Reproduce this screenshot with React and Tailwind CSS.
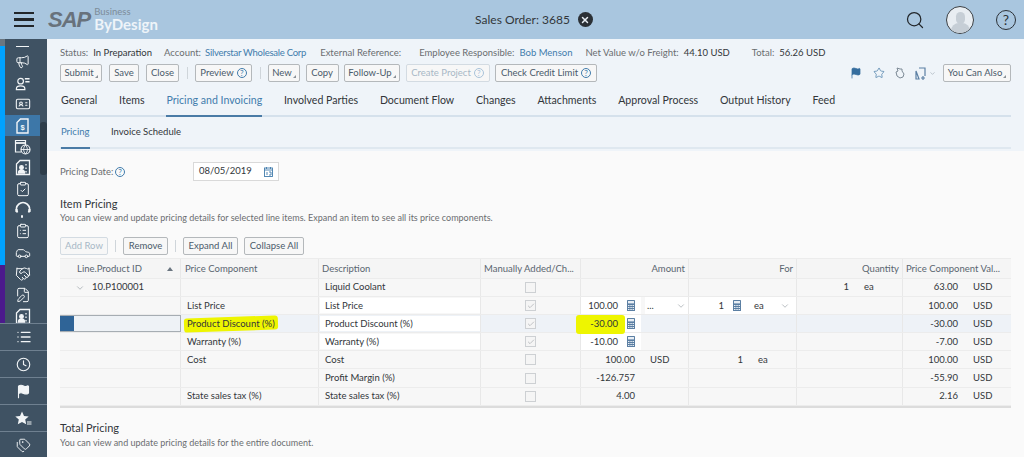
import React from "react";
import {
  Megaphone,
  IdCard,
  ClipboardCheck,
  ClipboardList,
  Car,
  Handshake,
  FilePen,
  List,
  Clock,
  Flag,
  Star,
  Tags,
  Search,
  ChevronDown,
  Check,
  X,
} from "lucide-react";

const PersonList = () => (
  <svg width="15" height="15" viewBox="0 0 16 16" fill="none" stroke="currentColor" strokeWidth="1.3">
    <circle cx="6" cy="5.5" r="3" />
    <path d="M1.5 14.5v-1c0-2 2-3 4.5-3s4.5 1 4.5 3v1z" />
    <path d="M10.5 3h5M11 6h4.5" strokeWidth="1.6" />
  </svg>
);

const DollarDoc = () => (
  <svg width="13" height="16" viewBox="0 0 13 16" fill="none" stroke="currentColor" strokeWidth="1.4">
    <path d="M4.500 1H12v14H1V4.500z" />
    <text x="4.500" y="11.500" fontSize="7.500" fill="currentColor" stroke="none" fontFamily="Liberation Sans, sans-serif" fontWeight="700">
      $
    </text>
  </svg>
);

const CalendarGlobe = () => (
  <svg width="17" height="17" viewBox="0 0 17 17" fill="none" stroke="currentColor" strokeWidth="1.2">
    <path d="M7 14H1.500V2.500h10V7" />
    <path d="M1.500 5h10" strokeWidth="1.800" />
    <circle cx="11.500" cy="11.500" r="4.500" />
    <path d="M7 11.500h9M11.500 7c-2.500 3-2.500 6 0 9M11.500 7c2.500 3 2.500 6 0 9" strokeWidth="0.9" />
  </svg>
);

const ContactDoc = () => (
  <svg width="16" height="17" viewBox="0 0 16 17" fill="none" stroke="currentColor" strokeWidth="1.3">
    <path d="M5 1.500h9.500v14h-13V5z" />
    <circle cx="6.500" cy="8.500" r="1.800" fill="currentColor" />
    <path d="M3.500 14c0-2 1.300-3 3-3s3 1 3 3z" fill="currentColor" />
    <path d="M11 5v1.500M11 8.500V10M11 12v1.500" />
  </svg>
);

const HeadArc = () => (
  <svg width="16" height="18" viewBox="0 0 16 18" fill="none" stroke="currentColor" strokeWidth="1.800">
    <path d="M2.500 11.500a6.500 6.500 0 1 1 11 0" />
    <path d="M1.500 8v3M14.500 8v3" strokeWidth="2.200" />
    <path d="M6 15.500h2" strokeWidth="2.400" />
  </svg>
);

const StarList = () => (
  <svg width="17" height="15" viewBox="0 0 17 15">
    <path d="M7 0.500l2 4.400 4.700.5-3.500 3.200 1 4.700L7 10.900l-4.200 2.400 1-4.700L.3 5.400 5 4.900z" fill="currentColor" />
    <path d="M12 11h4.500M12 13h4.500" stroke="currentColor" strokeWidth="1" />
  </svg>
);

const Calc = () => (
  <svg width="8" height="11" viewBox="0 0 8 11" className="shrink-0">
    <rect width="8" height="11" rx="0.600" fill="#5b7fa3" />
    <rect x="1" y="1" width="6" height="2.400" fill="#e8eef4" />
    <path d="M1 5h1.500v1H1zM3.300 5h1.500v1H3.300zM5.500 5H7v1H5.500zM1 7h1.500v1H1zM3.300 7h1.500v1H3.300zM5.500 7H7v1H5.500zM1 9h1.500v1H1zM3.300 9h1.500v1H3.300zM5.500 9H7v1H5.500z" fill="#e8eef4" />
  </svg>
);

const HelpDot = ({ light }) => (
  <span
    className={`inline-flex shrink-0 items-center justify-center w-[10px] h-[10px] rounded-full border text-[8px] leading-none ${
      light ? "border-[#a9c3da] text-[#a9c3da]" : "border-[#427cac] text-[#427cac]"
    }`}
  >
    ?
  </span>
);

const Corner = () => (
  <span className="self-end mb-[3px] -ml-[2px] w-0 h-0 border-l-[3px] border-l-transparent border-b-[3px] border-b-[#8a9299]" />
);

const Btn = ({ children, w, off }) => (
  <button
    type="button"
    className={`h-[18px] shrink-0 whitespace-nowrap rounded-[2px] border bg-[#f7f7f7] flex items-center justify-center gap-[3px] text-[9.500px] ${w} ${
      off ? "border-[#d3dbe2] text-[#a7b7c6]" : "border-[#b4b8bb] text-[#4a5a6a]"
    }`}
  >
    {children}
  </button>
);

const Sep = () => <span className="w-px h-[12px] bg-[#cfd5da] mx-[7px]" />;

const navIcons = [
  <Megaphone size={15} strokeWidth={1.600} />,
  <PersonList />,
  <IdCard size={16} strokeWidth={1.600} />,
  <DollarDoc />,
  <CalendarGlobe />,
  <ContactDoc />,
  <ClipboardCheck size={16} strokeWidth={1.500} />,
  <HeadArc />,
  <ClipboardList size={16} strokeWidth={1.500} />,
  <Car size={16} strokeWidth={1.500} />,
  <Handshake size={16} strokeWidth={1.500} />,
  <FilePen size={16} strokeWidth={1.500} />,
  <ContactDoc />,
];

const bottomIcons = [
  <List size={16} strokeWidth={2} />,
  <Clock size={15} strokeWidth={1.800} />,
  <Flag size={15} strokeWidth={1.800} fill="currentColor" />,
  <StarList />,
  <Tags size={15} strokeWidth={1.500} />,
];

const Sidebar = () => (
  <aside className="w-[47px] shrink-0 h-full bg-[#3f5263] flex flex-col text-[#f2f5f7]">
    <div className="h-[284px] shrink-0 flex overflow-hidden">
      <div className="w-[5px] flex flex-col">
        <div className="h-[7px] bg-[#6b7680]" />
        <div className="h-[219px] bg-[#00a2ff]" />
        <div className="flex-1 bg-[#4b1a8c]" />
      </div>
      <div className="w-[35px] flex flex-col">
        <div className="h-[12.400px] shrink-0 flex justify-center pt-[7px]">
          <span className="w-[13px] h-px bg-[#f2f5f7]" />
        </div>
        {navIcons.map((icon, i) => (
          <div key={i} className={`h-[21.200px] shrink-0 flex items-center justify-center ${i === 3 ? "bg-[#3d77a8]" : ""}`}>
            {icon}
          </div>
        ))}
      </div>
      <div className="w-[7px] pt-[83px]">
        <div className="h-[53px] rounded-[3px] bg-[#2e3d4a]" />
      </div>
    </div>
    {bottomIcons.map((icon, i) => (
      <div key={i} className="h-[27px] shrink-0 border-t border-[#6f8090] flex items-center justify-center">
        {icon}
      </div>
    ))}
  </aside>
);

const tabs = ["General", "Items", "Pricing and Invoicing", "Involved Parties", "Document Flow", "Changes", "Attachments", "Approval Process", "Output History", "Feed"];

// widths of the eight table columns
const cols = "grid grid-cols-[121px_138px_162px_100px_108px_108px_106px_108px]";

const rows = [
  { id: "10.P100001", desc: "Liquid Coolant", box: "empty", qty: "1", value: "63.00" },
  { comp: "List Price", desc: "List Price", white: true, box: "check", amount: "100.00", input: true, unitDots: true, forQty: "1", forUnit: "ea", forInput: true, value: "100.00" },
  { comp: "Product Discount (%)", desc: "Product Discount (%)", white: true, box: "check", amount: "-30.00", input: true, marked: true, selected: true, value: "-30.00" },
  { comp: "Warranty (%)", desc: "Warranty (%)", white: true, box: "check", amount: "-10.00", input: true, value: "-7.00" },
  { comp: "Cost", desc: "Cost", box: "empty", plainAmount: "100.00", cur: "USD", plainFor: "1", forUnit: "ea", value: "100.00" },
  { desc: "Profit Margin (%)", box: "empty", plainAmount: "-126.757", value: "-55.90" },
  { comp: "State sales tax (%)", desc: "State sales tax (%)", box: "empty", plainAmount: "4.00", value: "2.16" },
];

const Marker = ({ children, className }) => (
  <span className="relative inline-block">
    <span className={`absolute bg-[#eef500] rounded-[3px] ${className}`} />
    <span className="relative">{children}</span>
  </span>
);

const Box = ({ checked }) => (
  <span className="w-[11px] h-[11px] border border-[#cdd0d3] bg-[#f5f5f5] flex items-center justify-center">
    {checked && <Check size={8} strokeWidth={1.500} className="text-[#8a8f94]" />}
  </span>
);

const ValuePair = ({ left, right }) => (
  <div className="flex gap-[4px] h-full">
    <div className="flex-1 flex items-center justify-end pr-[5px]">{left}</div>
    <div className="w-[44px] flex items-center pl-[6px]">{right}</div>
  </div>
);

const Row = ({ r }) => {
  const bg = r.selected ? "bg-[#eef2f7]" : "bg-[#f7f7f7]";
  const cell = "border-r border-[#e8e8e8] min-w-0";
  return (
    <div className={`${cols} h-[18.100px] border-b border-[#ececec] text-[9.500px] text-[#32363a] ${bg}`}>
      {r.selected ? (
        <div className="flex border border-[#a6adb3] border-l-0">
          <div className="w-[14px] bg-[#2f6497]" />
          <div className="flex-1 bg-[#eef2f6]" />
        </div>
      ) : (
        <div className={`${cell} flex items-center gap-[7px] pl-[15px]`}>
          {r.id && (
            <>
              <ChevronDown size={10} strokeWidth={1} className="text-[#5a6570]" />
              <span>{r.id}</span>
            </>
          )}
        </div>
      )}
      <div className={`${cell} flex items-center pl-[6px]`}>
        {r.marked ? (
          <Marker className="-left-[3px] -right-[3px] top-0 bottom-0 -rotate-2">{r.comp}</Marker>
        ) : (
          r.comp
        )}
      </div>
      <div className={`${cell} py-px pl-[1px]`}>
        <div className={`h-full flex items-center pl-[5px] ${r.white ? "bg-white" : ""}`}>{r.desc}</div>
      </div>
      <div className={`${cell} flex items-center justify-center`}>
        <Box checked={r.box === "check"} />
      </div>
      <div className={cell}>
        {r.input ? (
          <div className="flex h-full">
            <div className={`w-[60px] flex items-center justify-end gap-[9px] pr-[6px] ${r.white ? "bg-white" : ""}`}>
              {r.marked ? <Marker className="-left-[14px] -right-[7px] -top-[2px] -bottom-[3px]">{r.amount}</Marker> : r.amount}
              <Calc />
            </div>
            {r.unitDots && (
              <div className="flex-1 ml-[4px] bg-white flex items-center justify-between pl-[2px] pr-[2px]">
                <span>...</span>
                <ChevronDown size={10} strokeWidth={1} className="text-[#5a6570]" />
              </div>
            )}
          </div>
        ) : (
          <ValuePair left={r.plainAmount} right={r.cur} />
        )}
      </div>
      <div className={cell}>
        {r.forInput ? (
          <div className="flex h-full bg-white items-center">
            <span className="w-[35px] text-right">{r.forQty}</span>
            <span className="ml-[9px]"><Calc /></span>
            <span className="ml-[13px]">{r.forUnit}</span>
            <ChevronDown size={10} strokeWidth={1} className="ml-[16px] text-[#5a6570]" />
          </div>
        ) : (
          <ValuePair left={r.plainFor} right={r.forUnit} />
        )}
      </div>
      <div className={cell}>
        <ValuePair left={r.qty} right={r.qty && "ea"} />
      </div>
      <div className="min-w-0">
        <ValuePair left={r.value} right="USD" />
      </div>
    </div>
  );
};

const App = () => {
  const headCell = "border-r border-[#e8e8e8] flex items-center pt-px";
  const label = "text-[#6a6d70]";
  return (
    <div className="w-[1024px] h-[457px] overflow-hidden flex flex-col bg-[#fafafa] font-['Lato',sans-serif] text-[#32363a]">
      <header className="h-[39px] shrink-0 bg-[#a9c6df] flex items-center">
        <div className="w-[47px] flex flex-col items-center gap-[4px]">
          <span className="w-[20px] h-[2.500px] bg-[#22262a]" />
          <span className="w-[20px] h-[2.500px] bg-[#22262a]" />
          <span className="w-[20px] h-[2.500px] bg-[#22262a]" />
        </div>
        <div className="flex items-start w-[115px] ml-[1px]">
          <span className="font-['Liberation_Sans',sans-serif] font-bold italic text-[22px] leading-none text-[#68727c] tracking-[-1px]">SAP</span>
          <div className="flex flex-col ml-[4px] -mt-[2px]">
            <span className="text-[9.500px] leading-[10px] text-[#7d8c99]">Business</span>
            <span className="text-[15px] leading-[14px] font-bold text-[#eef4f9]">ByDesign</span>
          </div>
        </div>
        <div className="flex-1 flex items-center justify-center gap-[8px] text-[12px]">
          <span className="text-[#32363a]">Sales Order: 3685</span>
          <span className="w-[15px] h-[15px] rounded-full bg-[#2b3036] flex items-center justify-center">
            <X size={10} strokeWidth={3.500} className="text-[#e9eff5]" />
          </span>
        </div>
        <div className="flex items-center pr-[8px]">
          <Search size={20} strokeWidth={1.500} className="text-[#22262a] mr-[21px]" />
          <div className="w-[28px] h-[28px] rounded-full border-[1.500px] border-[#3a3f44] bg-[#e8edf2] overflow-hidden flex flex-col items-center mr-[22px]">
            <span className="w-[9px] h-[12px] rounded-full bg-[#c6ced6] mt-[5px]" />
            <span className="w-[19px] h-[10px] rounded-t-[8px] bg-[#c6ced6] -mt-[1px]" />
          </div>
          <span className="w-[20px] h-[20px] rounded-full border-[1.500px] border-[#2b3036] flex items-center justify-center text-[14px] leading-none text-[#2b3036]">?</span>
        </div>
      </header>

      <div className="flex-1 min-h-0 flex">
        <Sidebar />
        <main className="flex-1 min-w-0 flex flex-col">
          <section className="h-[112px] shrink-0 bg-[#eff4f9] px-[13px]">
            <div className="h-[25px] pt-[3px] flex items-center text-[9.500px] whitespace-nowrap">
              <span className={label}>Status:</span>
              <span className="ml-[5px]">In Preparation</span>
              <span className={`${label} ml-[12px] w-[36px]`}>Account:</span>
              <span className="ml-[5px] text-[#427cac] tracking-[-0.25px]">Silverstar Wholesale Corp</span>
              <span className={`${label} ml-[14px]`}>External Reference:</span>
              <span className={`${label} ml-[18px]`}>Employee Responsible:</span>
              <span className="ml-[5px] text-[#427cac]">Bob Menson</span>
              <span className={`${label} ml-[13px]`}>Net Value w/o Freight:</span>
              <span className="ml-[5px]">44.10 USD</span>
              <span className={`${label} ml-[22px]`}>Total:</span>
              <span className="ml-[5px]">56.26 USD</span>
            </div>
            <div className="flex items-center h-[18px]">
              <div className="flex items-center gap-[7px]">
                <Btn w="w-[42px]">Submit<Corner /></Btn>
                <Btn w="w-[30px]">Save</Btn>
                <Btn w="w-[33px]">Close</Btn>
              </div>
              <span className="w-px h-[12px] bg-[#cfd5da] ml-[8px] mr-[7px]" />
              <Btn w="w-[57px]">Preview <HelpDot /></Btn>
              <span className="w-px h-[12px] bg-[#cfd5da] ml-[8px] mr-[7px]" />
              <div className="flex items-center gap-[5.500px]">
                <Btn w="w-[32px]">New<Corner /></Btn>
                <Btn w="w-[33px]">Copy</Btn>
                <Btn w="w-[56px]">Follow-Up<Corner /></Btn>
                <Btn w="w-[84px]" off>Create Project <HelpDot light /></Btn>
                <Btn w="w-[102px]">Check Credit Limit <HelpDot /></Btn>
              </div>
              <div className="ml-auto flex items-center text-[#5b7fa3]">
                <Flag size={12} fill="#356d9e" strokeWidth={1.500} className="text-[#356d9e] mr-[11px]" />
                <Star size={12} strokeWidth={1.300} className="text-[#356d9e] mr-[10px]" />
                <svg width="10" height="12" viewBox="0 0 10 12" fill="none" stroke="#7d8a96" strokeWidth="1" className="mr-[10px]">
                  <path d="M2 1l3 1h2v2l2 3-1 3-3 1-3-2-1-4 2-1z" />
                </svg>
                <svg width="11" height="13" viewBox="0 0 11 13" fill="none" stroke="#5b7fa3" strokeWidth="1.200">
                  <path d="M4 1h6v8M4 12H1V4z" />
                  <path d="M8 9v4M6 11h4" />
                </svg>
                <ChevronDown size={7} strokeWidth={1.500} className="text-[#7d8a96] ml-[3px] mr-[7px]" />
                <Btn w="w-[68px]">You Can Also<Corner /></Btn>
              </div>
            </div>
            <div className="flex gap-[21.800px] h-[35px] border-b-2 border-[#d5e1ec] pl-[1px] text-[10.600px] text-[#32363a]">
              {tabs.map((t) => (
                <span
                  key={t}
                  className={`flex items-center pt-[5px] -mb-[2px] border-b-2 whitespace-nowrap ${
                    t === "Pricing and Invoicing" ? "text-[#427cac] border-[#4a7ba6]" : "border-transparent"
                  }`}
                >
                  {t}
                </span>
              ))}
            </div>
            <div className="flex gap-[21px] h-[32px] border-b-2 border-[#dfe8f0] pl-[1px] text-[9.500px]">
              <span className="flex items-center -mb-[2px] border-b-2 border-[#4a7ba6] text-[#427cac] w-[29px]">Pricing</span>
              <span className="flex items-center text-[#32363a]">Invoice Schedule</span>
            </div>
          </section>

          <section className="flex-1 min-h-0 px-[13px]">
            <div className="h-[30px] pt-[11px] flex items-center text-[9.500px] text-[#6a6d70]">
              <span className="w-[55px] whitespace-nowrap pt-px">Pricing Date:</span>
              <HelpDot />
              <div className="ml-[68px] w-[86px] h-[19px] bg-white border border-[#d9d9d9] flex items-center justify-between pl-[5px] pr-[5px] text-[#32363a]">
                <span>08/05/2019</span>
                <svg width="9" height="10" viewBox="0 0 9 10" fill="none" stroke="#427cac" strokeWidth="0.900">
                  <rect x="0.500" y="1" width="8" height="8.500" />
                  <path d="M0.500 3h8M2.500 0v2M6.500 0v2M3 5v3M5 5h2v3H5" />
                </svg>
              </div>
            </div>
            <h3 className="mt-[15px] h-[15px] text-[11px] leading-[15px] font-normal text-[#32363a]">Item Pricing</h3>
            <p className="h-[14px] text-[9px] leading-[14px] text-[#6a6d70]">
              You can view and update pricing details for selected line items. Expand an item to see all its price components.
            </p>
            <div className="mt-[12px] h-[18px] flex items-center">
              <Btn w="w-[48px]" off>Add Row</Btn>
              <Sep />
              <Btn w="w-[45px]">Remove</Btn>
              <Sep />
              <Btn w="w-[55px]">Expand All</Btn>
              <span className="w-[6px]" />
              <Btn w="w-[60px]">Collapse All</Btn>
            </div>

            <div className="mt-[3px] w-[951px] border-b-2 border-[#dcdcdc]">
              <div className={`${cols} h-[21px] bg-[#f5f5f5] border-b border-t border-[#ececec] text-[9.500px] text-[#5a6570]`}>
                <div className={`${headCell} pl-[17px] justify-between pr-[7px]`}>
                  Line.Product ID
                  <span className="w-0 h-0 border-x-[3.500px] border-x-transparent border-b-[4px] border-b-[#6a7580]" />
                </div>
                <div className={`${headCell} pl-[4px]`}>Price Component</div>
                <div className={`${headCell} pl-[3px]`}>Description</div>
                <div className={`${headCell} pl-[3px]`}>Manually Added/Ch...</div>
                <div className={`${headCell} justify-end pr-[3px]`}>Amount</div>
                <div className={`${headCell} justify-end pr-[3px]`}>For</div>
                <div className={`${headCell} justify-end pr-[3px]`}>Quantity</div>
                <div className="flex items-center pt-px pl-[3px] whitespace-nowrap">Price Component Val...</div>
              </div>
              {rows.map((r, i) => (
                <Row key={i} r={r} />
              ))}
            </div>

            <h3 className="mt-[12px] h-[15px] text-[11px] leading-[15px] font-normal text-[#32363a]">Total Pricing</h3>
            <p className="mt-px text-[9px] leading-[14px] text-[#6a6d70]">You can view and update pricing details for the entire document.</p>
          </section>
        </main>
      </div>
    </div>
  );
};

export default App;
